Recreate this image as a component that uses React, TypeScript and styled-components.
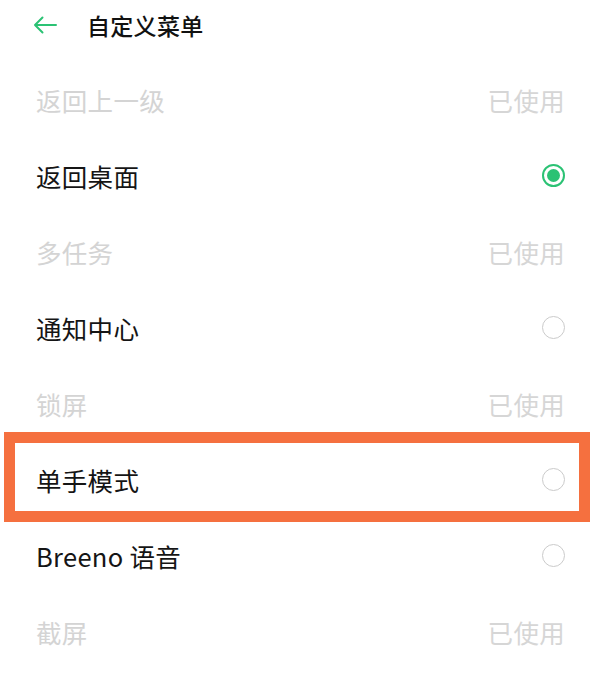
import React from "react";
import styled, { createGlobalStyle } from "styled-components";

const GlobalStyle = createGlobalStyle`
  html, body {
    margin: 0;
    padding: 0;
    background: #ffffff;
    font-family: "Noto Sans CJK SC", "Noto Sans", sans-serif;
  }
`;

const Page = styled.div`
  width: 593px;
  height: 673px;
  background: #ffffff;
  overflow: hidden;
`;

const Header = styled.header`
  height: 50px;
  display: flex;
  align-items: center;
  padding-left: 33px;
  gap: 30px;
`;

const BackButton = styled.button`
  border: none;
  background: none;
  padding: 0;
  width: 24px;
  height: 18px;
  display: flex;
  align-items: center;
  cursor: pointer;
`;

const Title = styled.h1`
  margin: 0;
  font-size: 23px;
  font-weight: 500;
  color: #111111;
  letter-spacing: 0.3px;
`;

const List = styled.ul`
  list-style: none;
  margin: 0;
  padding: 11px 0 0;
`;

const Row = styled.li<{ $disabled?: boolean }>`
  position: relative;
  height: 76px;
  display: flex;
  align-items: center;
  justify-content: space-between;
  padding: 0 28px 0 36px;
  color: ${(p) => (p.$disabled ? "#d4d4d4" : "#151515")};
  font-size: 25.5px;
`;

const Label = styled.span`
  letter-spacing: 0.3px;
`;

const UsedTag = styled.span`
  color: #d6d6d6;
  font-size: 25.5px;
  letter-spacing: 0.3px;
`;

const Radio = styled.span<{ $checked?: boolean }>`
  box-sizing: border-box;
  width: 23px;
  height: 23px;
  border-radius: 50%;
  margin-right: 0;
  border: ${(p) => (p.$checked ? "2px solid #2bc274" : "1.5px solid #cbcbcb")};
  display: flex;
  align-items: center;
  justify-content: center;
  &::after {
    content: "";
    display: ${(p) => (p.$checked ? "block" : "none")};
    width: 13px;
    height: 13px;
    border-radius: 50%;
    background: #2bc274;
  }
`;

const Highlight = styled.div`
  position: absolute;
  left: 4px;
  right: 3px;
  top: -9px;
  bottom: -5px;
  border: 11px solid #f5703f;
  pointer-events: none;
`;

type Item = {
  label: string;
  used?: boolean;
  checked?: boolean;
  highlight?: boolean;
};

const items: Item[] = [
  { label: "返回上一级", used: true },
  { label: "返回桌面", checked: true },
  { label: "多任务", used: true },
  { label: "通知中心" },
  { label: "锁屏", used: true },
  { label: "单手模式", highlight: true },
  { label: "Breeno 语音" },
  { label: "截屏", used: true },
];

export default function App() {
  return (
    <Page>
      <GlobalStyle />
      <Header>
        <BackButton aria-label="返回">
          <svg width="24" height="18" viewBox="0 0 24 18" fill="none">
            <path
              d="M23 9H2M9.5 1.5L2 9l7.5 7.5"
              stroke="#2bc274"
              strokeWidth="2"
              strokeLinecap="round"
              strokeLinejoin="round"
            />
          </svg>
        </BackButton>
        <Title>自定义菜单</Title>
      </Header>
      <List>
        {items.map((it) => (
          <Row key={it.label} $disabled={it.used}>
            <Label>{it.label}</Label>
            {it.used ? <UsedTag>已使用</UsedTag> : <Radio $checked={it.checked} />}
            {it.highlight && <Highlight />}
          </Row>
        ))}
      </List>
    </Page>
  );
}
